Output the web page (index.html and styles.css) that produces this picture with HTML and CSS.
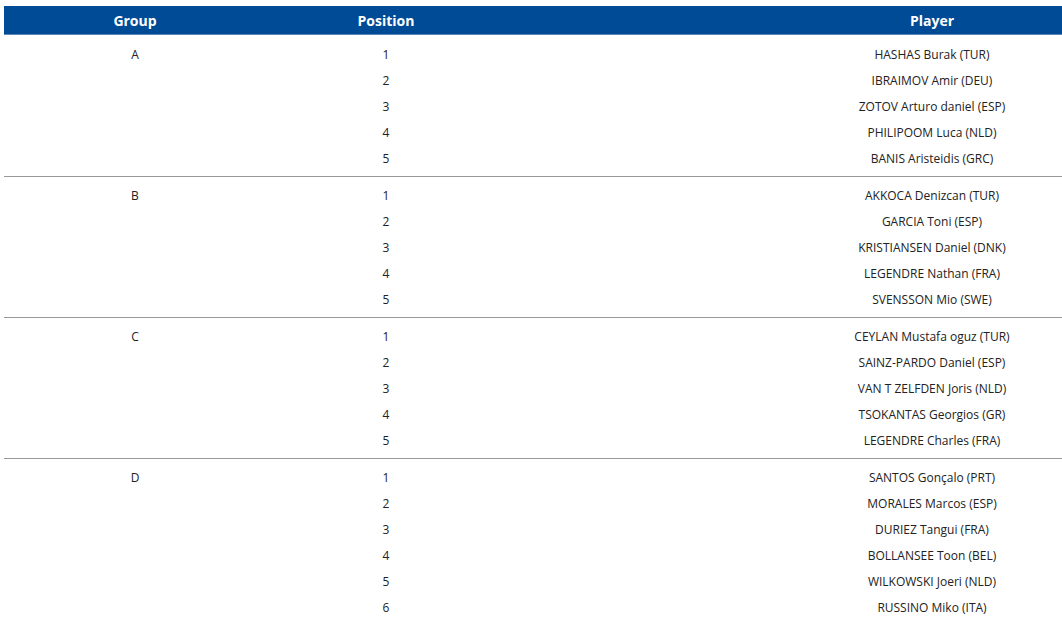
FILE: index.html
```html
<!DOCTYPE html>
<html>
<head>
<meta charset="utf-8">
<link rel="stylesheet" href="styles.css">
</head>
<body>
<div class="wrap">
<table class="results">
  <colgroup><col class="c-group"><col class="c-pos"><col class="c-player"></colgroup>
  <thead>
    <tr><th>Group</th><th>Position</th><th>Player</th></tr>
  </thead>
  <tbody class="grp first">
    <tr><td>A</td><td>1</td><td>HASHAS Burak (TUR)</td></tr>
    <tr><td></td><td>2</td><td>IBRAIMOV Amir (DEU)</td></tr>
    <tr><td></td><td>3</td><td>ZOTOV Arturo daniel (ESP)</td></tr>
    <tr><td></td><td>4</td><td>PHILIPOOM Luca (NLD)</td></tr>
    <tr><td></td><td>5</td><td>BANIS Aristeidis (GRC)</td></tr>
  </tbody>
  <tbody class="grp">
    <tr><td>B</td><td>1</td><td>AKKOCA Denizcan (TUR)</td></tr>
    <tr><td></td><td>2</td><td>GARCIA Toni (ESP)</td></tr>
    <tr><td></td><td>3</td><td>KRISTIANSEN Daniel (DNK)</td></tr>
    <tr><td></td><td>4</td><td>LEGENDRE Nathan (FRA)</td></tr>
    <tr><td></td><td>5</td><td>SVENSSON Mio (SWE)</td></tr>
  </tbody>
  <tbody class="grp">
    <tr><td>C</td><td>1</td><td>CEYLAN Mustafa oguz (TUR)</td></tr>
    <tr><td></td><td>2</td><td>SAINZ-PARDO Daniel (ESP)</td></tr>
    <tr><td></td><td>3</td><td>VAN T ZELFDEN Joris (NLD)</td></tr>
    <tr><td></td><td>4</td><td>TSOKANTAS Georgios (GR)</td></tr>
    <tr><td></td><td>5</td><td>LEGENDRE Charles (FRA)</td></tr>
  </tbody>
  <tbody class="grp">
    <tr><td>D</td><td>1</td><td>SANTOS Gonçalo (PRT)</td></tr>
    <tr><td></td><td>2</td><td>MORALES Marcos (ESP)</td></tr>
    <tr><td></td><td>3</td><td>DURIEZ Tangui (FRA)</td></tr>
    <tr><td></td><td>4</td><td>BOLLANSEE Toon (BEL)</td></tr>
    <tr><td></td><td>5</td><td>WILKOWSKI Joeri (NLD)</td></tr>
    <tr><td></td><td>6</td><td>RUSSINO Miko (ITA)</td></tr>
  </tbody>
</table>
</div>
</body>
</html>
```
FILE: styles.css
```css
html, body {
  margin: 0;
  padding: 0;
  background: #fff;
  overflow: hidden;
}
body {
  padding: 6px 0 0 4px;
  font-family: "Open Sans", "Liberation Sans", sans-serif;
  color: #222;
}
.wrap {
  width: 1058px;
  overflow: hidden;
}
.results {
  width: 1354px;
  border-collapse: collapse;
  table-layout: fixed;
}
.c-group { width: 262px; }
.c-pos { width: 240px; }
.c-player { width: 852px; }
.results th {
  background: #004b96;
  color: #fff;
  font-weight: 700;
  font-size: 14px;
  height: 28px;
  padding: 0;
  text-align: center;
  border-bottom: 1px solid #5a86b8;
}
.results td {
  font-size: 12px;
  height: 26px;
  padding: 0;
  text-align: center;
  vertical-align: middle;
  line-height: 16px;
}
.grp + .grp {
  border-top: 1px solid #999;
}
.grp tr:first-child td { padding-top: 6px; }
.grp.first tr:first-child td { padding-top: 7px; }
.grp tr:last-child td { padding-bottom: 4px; }
```
